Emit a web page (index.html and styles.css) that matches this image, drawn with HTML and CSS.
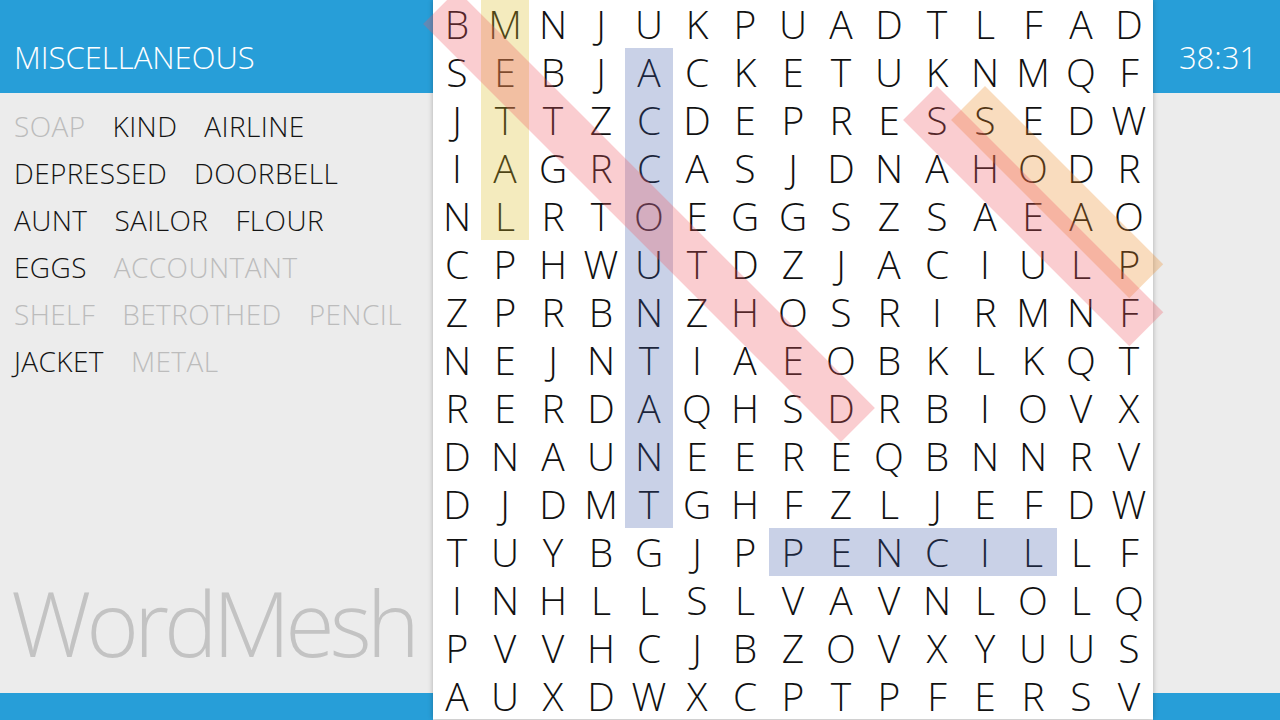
FILE: index.html
```html
<!DOCTYPE html>
<html>
<head>
<meta charset="utf-8">
<link rel="stylesheet" href="styles.css">
</head>
<body>
<div class="app">
  <aside class="side left">
    <header class="bar"><span class="title">MISCELLANEOUS</span></header>
    <div class="words">
      <div class="row"><span class="w found">SOAP</span><span class="w">KIND</span><span class="w">AIRLINE</span></div>
      <div class="row"><span class="w">DEPRESSED</span><span class="w">DOORBELL</span></div>
      <div class="row"><span class="w">AUNT</span><span class="w">SAILOR</span><span class="w">FLOUR</span></div>
      <div class="row"><span class="w">EGGS</span><span class="w found">ACCOUNTANT</span></div>
      <div class="row"><span class="w found">SHELF</span><span class="w found">BETROTHED</span><span class="w found">PENCIL</span></div>
      <div class="row"><span class="w">JACKET</span><span class="w found">METAL</span></div>
    </div>
    <div class="logo">WordMesh</div>
    <div class="foot"></div>
  </aside>
  <main class="board">
    <div class="grid" id="grid"></div>
    <div class="hl yellow" style="left:48px;top:0;width:48px;height:240px"></div>
    <div class="hl blue" style="left:192px;top:48px;width:48px;height:480px"></div>
    <div class="hl blue" style="left:336px;top:528px;width:288px;height:48px"></div>
    <div class="hl pink diag" style="left:0;top:0;width:591px"></div>
    <div class="hl orange diag" style="left:528px;top:96px;width:252px"></div>
    <div class="hl pink diag" style="left:480px;top:96px;width:320px"></div>
  </main>
  <aside class="side right">
    <header class="bar"><span class="timer">38:31</span></header>
    <div class="spacer"></div>
    <div class="foot"></div>
  </aside>
</div>
<script src="script.js"></script>
</body>
</html>
```
FILE: script.js
```js
var rows = [
"BMNJUKPUADTLFAD",
"SEBJACKETUKNMQF",
"JTTZCDEPRESSEDW",
"IAGRCASJDNAHODR",
"NLRTOEGGSZSAEAO",
"CPHWUTDZJACIULP",
"ZPRBNZHOSRIRMNF",
"NEJNTIAEOBKLKQT",
"RERDAQHSDRBIOVX",
"DNAUNEEREQBNNRV",
"DJDMTGHFZLJEFDW",
"TUYBGJPPENCILLF",
"INHLLSLVAVNLOLQ",
"PVVHCJBZOVXYUUS",
"AUXDWXCPTPFERSV"
];
var g = document.getElementById('grid');
rows.forEach(function (r) {
  for (var i = 0; i < r.length; i++) {
    var s = document.createElement('span');
    s.className = 'cell';
    s.textContent = r[i];
    g.appendChild(s);
  }
});
```
FILE: styles.css
```css
html, body {
  margin: 0;
  padding: 0;
}
body {
  width: 1280px;
  height: 720px;
  overflow: hidden;
  background: #ececec;
  font-family: "Open Sans", "Liberation Sans", sans-serif;
  font-weight: 300;
}
.app {
  display: flex;
  width: 1280px;
  height: 720px;
}
.side {
  display: flex;
  flex-direction: column;
  background: #ececec;
}
.left {
  width: 433px;
}
.right {
  width: 127px;
}
.bar {
  height: 93px;
  box-sizing: border-box;
  padding-top: 22px;
  background: #279ed8;
  color: #fff;
  display: flex;
  align-items: center;
  font-size: 31px;
  line-height: 1;
}
.left .bar {
  padding-left: 14px;
}
.right .bar {
  justify-content: center;
  padding-left: 3px;
}
.words {
  padding: 10px 0 0 14px;
  font-size: 28px;
  line-height: 47px;
  color: #141414;
  flex: 1;
  letter-spacing: 0.4px;
}
.row {
  display: flex;
  gap: 27px;
}
.w.found {
  color: #bcbcbc;
}
.logo {
  font-size: 90px;
  line-height: 91px;
  color: #c3c3c3;
  padding-left: 11px;
  margin-bottom: 25px;
  letter-spacing: -5px;
}
.spacer {
  flex: 1;
}
.foot {
  height: 27px;
  background: #279ed8;
}
.board {
  position: relative;
  width: 720px;
  height: 719px;
  background: #fff;
  box-shadow: 0 0 5px rgba(0, 0, 0, 0.28);
  z-index: 1;
}
.grid {
  display: grid;
  grid-template-columns: repeat(15, 48px);
  grid-template-rows: repeat(15, 48px);
}
.cell {
  display: flex;
  align-items: center;
  justify-content: center;
  font-size: 39px;
  line-height: 48px;
  color: #111;
}
.hl {
  position: absolute;
}
.diag {
  height: 48px;
  transform-origin: 24px 24px;
  transform: rotate(45deg);
}
.yellow {
  background: rgba(220, 190, 40, 0.3);
}
.blue {
  background: rgba(60, 90, 170, 0.28);
}
.pink {
  background: rgba(240, 90, 100, 0.3);
}
.orange {
  background: rgba(235, 140, 40, 0.3);
}
```
